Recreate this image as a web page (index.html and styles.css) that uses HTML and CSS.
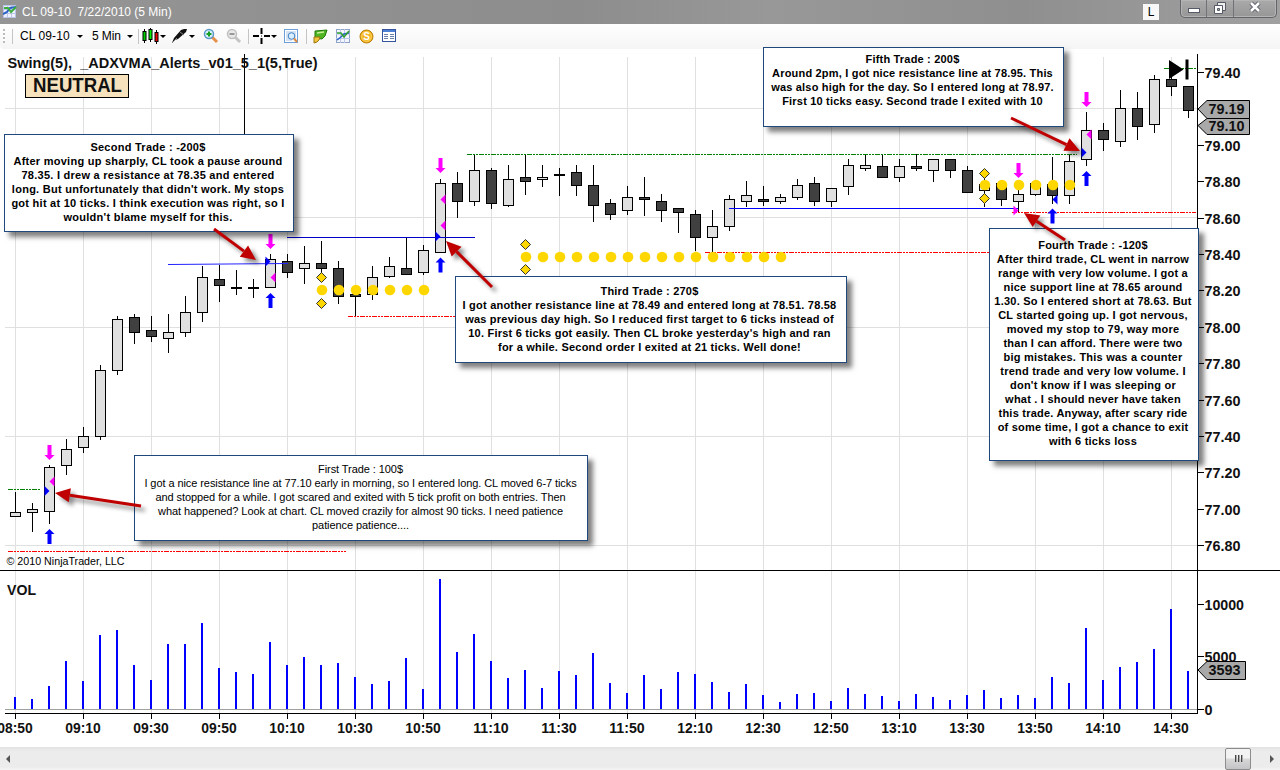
FILE: index.html
```html
<!DOCTYPE html>
<html lang="en">

<head>
  <meta charset="utf-8">
  <title>CL 09-10 7/22/2010 (5 Min)</title>
  <link rel="stylesheet" href="styles.css">
</head>

<body>
  <header class="titlebar">
    <svg class="app-icon" width="14" height="14" viewBox="0 0 14 14">
      <rect x=".5" y="1.5" width="12" height="12" fill="#eef1fb" stroke="#b9c3e6"/>
      <path d="M4.5 1v12M8.5 1v12M0 5.500h13M0 9.500h13" stroke="#bcc6ea"/>
      <path d="M0 10l4-2 3-4 6-1" fill="none" stroke="#2d62c8" stroke-width="2"/>
      <path d="M1 4l4 0 3 4 5-5" fill="none" stroke="#3cae3c" stroke-width="2"/>
    </svg>
    <h1>CL 09-10&nbsp; 7/22/2010 (5 Min)</h1>
    <span class="link-box">L</span>
    <div class="win-buttons">
      <span class="min"><svg width="14" height="8"><rect x="1.500" y="2.500" width="11" height="4" fill="#fff" stroke="#555a66"/></svg></span>
      <span class="restore"><svg width="14" height="14"><path d="M4.500 1.500h8v8h-8z" fill="#eee" stroke="#555a66"/><path d="M1.500 4.500h8v8h-8z" fill="#fff" stroke="#555a66"/><path d="M4.500 7.500h2v2h-2z" fill="#aaa" stroke="#555a66"/></svg></span>
      <span class="close"><svg width="14" height="12"><path d="M3 2l8 8M11 2l-8 8" stroke="#555a66" stroke-width="4.500"/><path d="M3 2l8 8M11 2l-8 8" stroke="#fff" stroke-width="2.500"/></svg></span>
    </div>
  </header>

  <nav class="toolbar">
    <i class="grip"></i>
    <i class="sep"></i>
    <span class="pick instrument">CL 09-10</span><i class="caret"></i>
    <span class="pick interval">5 Min</span><i class="caret"></i>
    <i class="sep sep-2"></i>
    <svg class="tool" width="17" height="16" viewBox="0 0 17 16">
      <path d="M2.500 1v14M8.500 0v14M14.500 2v14" stroke="#000"/>
      <rect x="1" y="3.500" width="3" height="9" fill="#0c0" stroke="#000"/>
      <rect x="7" y="1.500" width="3" height="10" fill="#0e0" stroke="#000"/>
      <rect x="13" y="4.500" width="3" height="9" fill="#e00" stroke="#000"/>
    </svg><i class="caret caret-icon"></i>
    <svg class="tool pen" width="17" height="16" viewBox="0 0 17 16">
      <path d="M1 15l2-5 7-8 3-1 3 0-1 3-8 7-3 1z" fill="#111"/>
      <path d="M1 15l5-5M9 4l4 3" stroke="#888"/>
    </svg><i class="caret caret-icon"></i>
    <svg class="tool zoom" width="16" height="16" viewBox="0 0 16 16">
      <path d="M9 9l5 5" stroke="#e89048" stroke-width="3"/>
      <circle cx="6" cy="6" r="4.500" fill="#d8f0ff" stroke="#5b98c8" stroke-width="1.500"/>
      <path d="M3.500 6h5M6 3.500v5" stroke="#16a022" stroke-width="2"/>
    </svg>
    <svg class="tool zoom-out" width="16" height="16" viewBox="0 0 16 16">
      <path d="M9 9l5 5" stroke="#c4c4c4" stroke-width="3"/>
      <circle cx="6" cy="6" r="4.500" fill="#e8e8e8" stroke="#c0c0c0" stroke-width="1.500"/>
      <path d="M3.500 6h5" stroke="#999" stroke-width="2"/>
    </svg>
    <i class="sep sep-3"></i>
    <svg class="tool" width="17" height="16" viewBox="0 0 17 16">
      <path d="M0 8h6M11 8h6M8.500 0v6M8.500 10v6" stroke="#000" stroke-width="2"/>
      <path d="M8 8h1" stroke="#000"/>
    </svg><i class="caret caret-icon"></i>
    <svg class="tool data-box" width="15" height="15" viewBox="0 0 15 15">
      <rect x=".5" y=".5" width="13" height="13" fill="#fff" stroke="#6f9fd8"/>
      <path d="M2 3h10M2 5h10M2 7h10M2 9h10M2 11h6" stroke="#a9c6ea"/>
      <circle cx="7.500" cy="7" r="3.300" fill="#d9efff" stroke="#3f7fc4"/>
      <path d="M10 9.500l3 3.500" stroke="#e08a40" stroke-width="2"/>
    </svg>
    <i class="sep sep-4"></i>
    <svg class="tool trade" width="15" height="15" viewBox="0 0 15 15">
      <path d="M2 2l12-1-2 6-3 3-7-1z" fill="#4fb522" stroke="#217a0c"/>
      <path d="M4 4l7-1" stroke="#c8f09a" stroke-width="1.500"/>
      <path d="M1 8l6 0-1 3-2 2-3 1z" fill="#f0c63a" stroke="#9d7412"/>
    </svg>
    <svg class="tool chart-icon" width="15" height="15" viewBox="0 0 15 15">
      <rect x=".5" y=".5" width="13" height="13" fill="#f4f6ff" stroke="#8fa2c8"/>
      <path d="M4.500 0v14M8.500 0v14M0 5h14M0 9.500h14" stroke="#bcc6ea"/>
      <path d="M1 11l4-3 3-3 5-1" fill="none" stroke="#2d62c8" stroke-width="1.500"/>
      <path d="M1 4l4 0 3 4 5-6" fill="none" stroke="#2fa02f" stroke-width="1.500"/>
    </svg>
    <svg class="tool coin" width="15" height="15" viewBox="0 0 15 15">
      <circle cx="7.500" cy="7.500" r="6.500" fill="#f2b21c" stroke="#b97e08"/>
      <circle cx="7.500" cy="7.500" r="4.800" fill="none" stroke="#ffd968"/>
      <text class="coin-s" x="7.500" y="11.300">S</text>
    </svg>
    <svg class="tool props" width="15" height="14" viewBox="0 0 15 14">
      <rect x=".5" y=".5" width="13" height="12" fill="#fff" stroke="#34549c"/>
      <rect x="1" y="1" width="12" height="2" fill="#4c7fd6"/>
      <path d="M2 5.500h4M2 7.500h4M2 9.500h4M8 5.500h4M8 7.500h4M8 9.500h4" stroke="#6b7fae"/>
    </svg>
  </nav>

  <main class="chart">
    <svg id="plot" width="1280" height="698" viewBox="0 49 1280 698"></svg>

    <article class="note first">
      <h2>First Trade : 100$</h2>
      <p>I got a nice resistance line at 77.10 early in morning, so I entered long. CL moved 6-7 ticks<br>and stopped for a while. I got scared and exited with 5 tick profit on both entries. Then<br>what happened? Look at chart. CL moved crazily for almost 90 ticks. I need patience<br>patience patience....</p>
    </article>
    <article class="note second">
      <h2>Second Trade : -200$</h2>
      <p>After moving up sharply, CL took a pause around<br>78.35. I drew a resistance at 78.35 and entered<br>long. But unfortunately that didn't work. My stops<br>got hit at 10 ticks. I think execution was right, so I<br>wouldn't blame myself for this.</p>
    </article>
    <article class="note third">
      <h2>Third Trade : 270$</h2>
      <p>I got another resistance line at 78.49 and entered long at 78.51. 78.58<br>was previous day high. So I reduced first target to 6 ticks instead of<br>10. First 6 ticks got easily. Then CL broke yesterday's high and ran<br>for a while. Second order I exited at 21 ticks. Well done!</p>
    </article>
    <article class="note fourth">
      <h2>Fourth Trade : -120$</h2>
      <p>After third trade, CL went in narrow<br>range with very low volume. I got a<br>nice support line at 78.65 around<br>1.30. So I entered short at 78.63. But<br>CL started going up. I got nervous,<br>moved my stop to 79, way more<br>than I can afford. There were two<br>big mistakes. This was a counter<br>trend trade and very low volume. I<br>don't know if I was sleeping or<br>what . I should never have taken<br>this trade. Anyway, after scary ride<br>of some time, I got a chance to exit<br>with 6 ticks loss</p>
    </article>
    <article class="note fifth">
      <h2>Fifth Trade : 200$</h2>
      <p>Around 2pm, I got nice resistance line at 78.95. This<br>was also high for the day. So I entered long at 78.97.<br>First 10 ticks easy. Second trade I exited with 10</p>
    </article>

    <svg id="pointers" width="1280" height="698" viewBox="0 49 1280 698"></svg>
  </main>

  <footer class="scrollbar">
    <i class="arrow left"></i>
    <span class="thumb"><i></i><i></i><i></i></span>
    <i class="arrow right"></i>
  </footer>

  <script src="script.js"></script>
</body>

</html>
```
FILE: styles.css
```css
* {box-sizing:border-box;}
body {
  margin:0; width:1280px; height:770px; overflow:hidden;
  display:flex; flex-direction:column;
  background:#fff; color:#000;
  font-family:"Liberation Sans", Arial, sans-serif;
}

/* window title */
.titlebar {
  flex:0 0 24px; display:flex; align-items:flex-start;
  padding:0 3px 0 3px;
  background:linear-gradient(90deg, #959595, #8d8d8d 45%, #989898 60%, #8f8f8f 80%, #a0a0a0);
}
.titlebar .app-icon {margin-top:4px;}
.titlebar h1 {
  margin:0 auto 0 5px; padding-top:1px;
  color:#fff; font-size:12px; font-weight:normal;
  line-height:22px; white-space:nowrap;
}
.link-box {
  width:16px; height:16px; margin:4px 21px 0 0;
  background:#f7f7f7; font-size:12px; line-height:17px; text-align:center;
}
.win-buttons {
  display:flex; width:97px; height:18px;
  border:1px solid #62646a; border-top:0; border-radius:0 0 5px 5px;
  background:linear-gradient(#aaa, #969696);
  box-shadow:inset 0 0 0 1px #b4b4b4;
}
.win-buttons span {display:flex; align-items:center; justify-content:center; border-right:1px solid #707278;}
.win-buttons .min {width:26px; padding-top:2px;}
.win-buttons .restore {width:27px; padding-bottom:2px;}
.win-buttons .close {flex:1; border:0; padding-bottom:3px;}

/* toolbar */
.toolbar {
  flex:0 0 25px; display:flex; align-items:center;
  padding:0 0 1px 3px;
  background:linear-gradient(#fff, #f5f5f5);
  border-radius:0 0 0 4px;
  font-size:12px; white-space:nowrap;
}
.grip {width:2px; height:14px; background:repeating-linear-gradient(#bbb 0 2px, #fff 2px 4px);}
.sep {width:1px; height:15px; margin:0 7px; background:#c4c4c4;}
.instrument {width:50px; letter-spacing:.1px;}
.interval {width:28px; margin-left:9px; letter-spacing:-.1px;}
.caret {margin-left:7px; border:3px solid transparent; border-top-color:#000; border-bottom:0;}
.caret-icon {margin-left:1px;}
.sep-2 {margin:0 3px 0 5px;}
.pen {margin-left:5px;}
.zoom {margin-left:8px;}
.zoom-out {margin-left:7px;}
.sep-3 {margin:0 4px 0 6px;}
.data-box {margin-left:7px;}
.sep-4 {margin:0 6px 0 7px;}
.chart-icon {margin-left:8px;}
.coin {margin-left:8px;}
.props {margin-left:8px;}
.coin-s {font-size:10px; font-weight:bold; fill:#fff; text-anchor:middle;}

/* chart */
.chart {position:relative; flex:0 0 698px;}
#plot {display:block;}
#pointers {position:absolute; top:0; left:0;}
#plot .grid {stroke:#e0e0e0;}
#plot .axis {stroke:#000;}
#plot .label {font-size:15px; font-weight:bold; fill:#111;}
#plot .mid {text-anchor:middle;}
#plot .light {fill:#e0e0e0; stroke:#000;}
#plot .dark {fill:#404040; stroke:#000;}
#plot .vol {fill:#00f;}
#plot .dashed {stroke-dasharray:5 1 2 1 2 1;}
#plot .tag {fill:#a9a9a9; stroke:#000;}
#plot .state {font-size:19.5px; font-weight:bold; fill:#111;}
#plot .copy {font-size:11px;}
#plot .dot {fill:#ffd700;}
#plot .diamond {fill:#ffd700; stroke:#333;}
#pointers {filter:drop-shadow(4px 4px 2px rgba(0,0,0,.45));}
#pointers line {stroke:#c00000; stroke-width:3;}
#pointers polygon {fill:#c00000;}

.note {
  position:absolute;
  background:#fff; border:1px solid #1f497d;
  box-shadow:5px 5px 5px rgba(0,0,0,.5);
  font-size:11px; font-weight:bold; line-height:14px;
  text-align:center; white-space:nowrap;
}
.note h2, .note p {margin:0; font-size:inherit; font-weight:inherit;}
.first {left:134px; top:406px; width:454px; height:86px; padding:6px 1px 0 0; font-weight:normal; letter-spacing:-.075px;}
.second {left:4px; top:85px; width:290px; height:98px; padding:5px 2px 0 0; letter-spacing:.26px;}
.third {left:455px; top:227px; width:392px; height:87px; padding:7px 3px 0 0; letter-spacing:.22px;}
.fourth {left:989px; top:179px; width:210px; height:233px; padding:9px 2px 0 0; letter-spacing:.22px;}
.fifth {left:763px; top:-2px; width:301px; height:80px; padding:4px 2px 0 0; letter-spacing:.19px;}

/* scrollbar */
.scrollbar {
  flex:1; display:flex; align-items:center;
  padding:0 6px;
  background:linear-gradient(#e2e2e2, #ececec 4px, #ececec 20px, #f5f5f5);
}
.arrow {border:4px solid transparent;}
.left {border-left:0; border-right-color:#555;}
.right {border-right:0; border-left-color:#555; margin-left:19px;}
.thumb {
  display:flex; align-items:center; justify-content:center; gap:2px;
  width:26px; height:22px; margin-left:auto;
  border:1px solid #8c8c8c; border-radius:2px;
  background:linear-gradient(#f2f2f2 45%, #d8d8d8 50%, #c4c4c8);
}
.thumb i {width:1px; height:7px; background:#444; box-shadow:1px 0 #aaa;}
```
FILE: script.js
```js
const plot = document.querySelector('#plot'),
  pointers = document.querySelector('#pointers'),
  NS = 'http://www.w3.org/2000/svg';

function draw(parent, name, attrs, text) {
  const el = document.createElementNS(NS, name);
  for (const key in attrs) el.setAttribute(key, attrs[key]);
  if (text) el.textContent = text;
  parent.appendChild(el);
}
function line(x1, y1, x2, y2, attrs) {
  draw(plot, 'line', Object.assign({x1: x1, y1: y1, x2: x2, y2: y2}, attrs));
}
function label(x, y, text, cls, width) {
  draw(plot, 'text', {x: x, y: y, class: cls, textLength: width, lengthAdjust: 'spacingAndGlyphs'}, text);
}
function shape(points, attrs) {
  draw(plot, 'polygon', Object.assign({points: points}, attrs));
}
// one bar every 17px, the first is 08:50
function barX(i) { return 15 + 17 * i; }

// high, body top, body bottom, low, d = down bar
const bars = [
  [492,512,517,517], [503,509,513,532], [465,467,512,524], [439,449,466,475], [427,436,448,453],
  [365,370,437,440], [316,319,371,375], [314,317,333,344,'d'], [316,330,337,342,'d'], [314,332,339,353],
  [296,312,333,337], [266,277,313,322], [265,279,286,302,'d'], [270,287,289,295,'d'], [279,287,289,298,'d'],
  [254,259,288,288], [254,261,273,278,'d'], [246,263,269,284], [241,263,269,275,'d'], [261,268,297,304,'d'],
  [294,294,297,317,'d'], [266,277,295,300], [257,266,277,278], [238,268,275,275,'d'], [245,250,273,275],
  [179,183,253,253], [172,183,202,218,'d'], [154,170,202,206], [168,170,204,209,'d'], [165,179,206,207],
  [155,177,182,195,'d'], [165,177,180,187], [168,174,176,196,'d'], [165,172,186,196,'d'], [165,185,206,222,'d'],
  [199,203,215,220,'d'], [186,197,211,215], [177,197,200,216,'d'], [194,201,211,222,'d'], [208,208,213,233,'d'],
  [210,214,238,251,'d'], [210,226,238,252], [195,199,227,231], [181,195,202,207], [186,199,202,206,'d'],
  [194,197,202,204], [179,185,198,200], [177,183,202,206,'d'], [188,188,202,207], [159,165,187,195],
  [154,165,169,171], [154,166,178,178,'d'], [159,166,178,182], [154,166,169,171,'d'], [159,159,171,182],
  [159,159,171,178,'d'], [166,170,193,193,'d'], [177,184,191,207], [183,183,200,206,'d'], [190,194,202,212],
  [183,183,195,196], [157,184,196,204,'d'], [155,161,196,204], [112,130,160,166], [123,130,140,151,'d'],
  [90,108,142,147], [92,108,127,140,'d'], [75,79,125,133], [76,79,87,96,'d'], [86,86,111,118,'d']
];
const volume = [
  697,699,686,661,681,635,630,665,680,644,644,623,668,672,674,642,665,657,665,663,677,684,681,658,
  689,579,652,634,661,678,670,688,671,675,653,683,693,675,689,672,674,682,692,684,695,702,694,693,
  701,688,694,696,701,694,697,700,695,690,698,695,698,677,683,628,680,667,662,649,609,671
];

// grid
for (let x = 15.5; x < 1197; x += 68) line(x, 57, x, 713, {class: 'grid'});
[108.5, 217.5, 327.5, 436.5, 545.5].forEach(y => line(5, y, 1197, y, {class: 'grid'}));
line(244.5, 54, 244.5, 135, {class: 'axis'});

// volume
bars.forEach((b, i) => draw(plot, 'rect', {x: barX(i) - 1, y: volume[i], width: 2, height: 709 - volume[i], class: 'vol'}));

// axes
line(5, 709.5, 1197, 709.5, {stroke: '#a0a0a0'});
line(5, 713.5, 1198, 713.5, {class: 'axis'});
line(1197.5, 54, 1197.5, 714, {class: 'axis'});
line(0, 570.5, 1280, 570.5, {class: 'axis'});
for (let i = 0; i < 14; i++) {
  const y = 72.5 + Math.round(36.4 * i);
  const price = (79.4 - 0.2 * i).toFixed(2);
  if (price === '79.20') continue;
  line(1198, y, 1204, y, {class: 'axis'});
  label(1204.5, y + 5, price, 'label', 36);
}
[['10000', 604.5, 39.5], ['5000', 656.5, 32], ['0', 709.5, 8]].forEach(v => {
  line(1198, v[1], 1204, v[1], {class: 'axis'});
  label(1204.5, v[1] + 5, v[0], 'label', v[2]);
});
for (let i = 0; i < 18; i++) {
  const m = 530 + 20 * i;
  const time = String(Math.floor(m / 60)).padStart(2, '0') + ':' + String(m % 60).padStart(2, '0');
  line(15.5 + 68 * i, 714, 15.5 + 68 * i, 719, {class: 'axis'});
  label(15 + 68 * i, 733, time, 'label mid', 35.5);
}

// candles
bars.forEach((b, i) => {
  const x = barX(i) + 0.5;
  line(x, b[0], x, b[3], {class: 'axis'});
  draw(plot, 'rect', {x: x - 5, y: b[1] + 0.5, width: 10, height: Math.max(b[2] - b[1] - 1, 1), class: b[4] ? 'dark' : 'light'});
});

// swing highs and lows
[[8, 40, 489, 'green'], [8, 346, 551, 'red'], [348, 456, 316, 'red'], [467, 1077, 154, 'green'],
 [705, 990, 252, 'red'], [1012, 1196, 212, 'red'], [1164, 1196, 68, 'green']].forEach(s => {
  line(s[0], s[2] + 0.5, s[1], s[2] + 0.5, {stroke: s[3], class: 'dashed'});
});
// hand drawn levels
line(168, 264.5, 288, 263.5, {stroke: '#22f'});
line(287, 237.5, 475, 237.5, {stroke: '#0000c8'});
line(729, 208.5, 1018, 208.5, {stroke: '#00f'});

// ADXVMA dots
[[18, 24, 290], [30, 45, 257], [57, 62, 185]].forEach(d => {
  for (let i = d[0]; i <= d[1]; i++) draw(plot, 'circle', {cx: barX(i) + 1, cy: d[2], r: 5.3, class: 'dot'});
});
[[18, 277.5], [18, 303.5], [30, 244.5], [30, 269.5], [57, 173.5], [57, 198.5]].forEach(d => {
  const x = barX(d[0]) + 0.5, y = d[1];
  shape(`${x - 5},${y} ${x},${y - 5} ${x + 5},${y} ${x},${y + 5}`, {class: 'diamond'});
});

// order arrows, tip position
function arrow(i, y, dir, fill) {
  const x = barX(i) + 0.5;
  shape(`${x},${y} ${x + 5},${y + 5 * dir} ${x + 2},${y + 5 * dir} ${x + 2},${y + 15 * dir} ${x - 2},${y + 15 * dir} ${x - 2},${y + 5 * dir} ${x - 5},${y + 5 * dir}`, {fill: fill});
}
[[2, 460], [15, 249], [25, 173], [59, 178], [63, 107]].forEach(a => arrow(a[0], a[1], -1, '#f0f'));
[[2, 529], [15, 293], [25, 257.5], [61, 208.5], [63, 171]].forEach(a => arrow(a[0], a[1], 1, '#00f'));
// fills
[[2, 491, 1, '#00f'], [2, 481.5, -1, '#f0f'], [15, 261.5, 1, '#00f'], [15, 277.5, -1, '#f0f'],
 [25, 236.5, 1, '#00f'], [25, 199.5, -1, '#f0f'], [25, 225.5, -1, '#f0f'], [59, 210.5, 1, '#f0f'],
 [61, 199.5, -1, '#00f'], [63, 152.5, 1, '#00f'], [63, 134.5, -1, '#f0f']].forEach(t => {
  const x = barX(t[0]) + 0.5, y = t[1];
  shape(`${x - 5 * t[2]},${y - 5} ${x},${y} ${x - 5 * t[2]},${y + 5}`, {fill: t[3]});
});

// jump to last bar
shape('1169,60 1183.5,69.5 1169,79', {fill: '#000'});
draw(plot, 'rect', {x: 1185.5, y: 59.5, width: 3, height: 20, fill: '#000'});

// price tags
[[109, 100.5, 118.5, 1249.5, '79.19', 36], [125.5, 118.5, 134.5, 1249.5, '79.10', 36], [670, 661.5, 679.5, 1245.5, '3593', 32]].forEach(t => {
  shape(`1198,${t[0]} 1207,${t[1]} ${t[3]},${t[1]} ${t[3]},${t[2]} 1207,${t[2]}`, {class: 'tag'});
  label(1208.5, t[0] + 5, t[4], 'label', t[5]);
});

// panel captions
label(7.5, 68, 'Swing(5),\u00a0 _ADXVMA_Alerts_v01_5_1(5,True)', 'label', 310);
draw(plot, 'rect', {x: 25.5, y: 74.5, width: 103, height: 23, fill: '#f5deb3', 'fill-opacity': 0.85, stroke: '#000'});
label(33, 92, 'NEUTRAL', 'state', 89);
label(7, 595, 'VOL', 'label', 29);
label(6.5, 565, '© 2010 NinjaTrader, LLC', 'copy', 118);

// red pointers from the notes, tail then tip
[[141, 506, 55, 493], [214, 229, 256, 260], [492, 287, 446, 241], [1065, 240, 1024, 213], [1011, 118, 1080, 151]].forEach(p => {
  const a = Math.atan2(p[3] - p[1], p[2] - p[0]), c = Math.cos(a), s = Math.sin(a);
  const bx = p[2] - 15 * c, by = p[3] - 15 * s;
  draw(pointers, 'line', {x1: p[0], y1: p[1], x2: bx, y2: by});
  draw(pointers, 'polygon', {points: `${p[2]},${p[3]} ${bx - 7 * s},${by + 7 * c} ${bx + 7 * s},${by - 7 * c}`});
});
```
